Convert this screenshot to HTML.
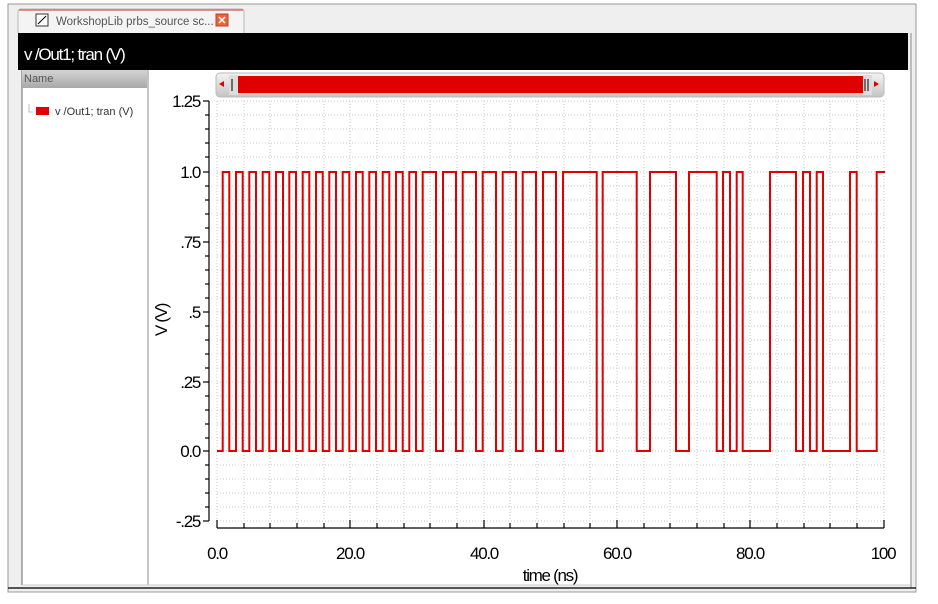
<!DOCTYPE html>
<html><head><meta charset="utf-8"><style>
html,body{margin:0;padding:0;background:#fff;width:938px;height:604px;overflow:hidden}
svg{display:block}
text{font-family:"Liberation Sans",sans-serif}
</style></head><body>
<svg width="938" height="604" xmlns="http://www.w3.org/2000/svg">
<rect x="0" y="0" width="938" height="604" fill="#fff"/>
<rect x="8" y="4" width="908" height="588" fill="#efefef" stroke="#9a9a9a"/>
<!-- tab -->
<path d="M18 33 V12 Q18 9 21 9 H241 Q244 9 244 12 V33" fill="#f4f4f4" stroke="#b8b8b8"/>
<line x1="19" y1="10" x2="243" y2="10" stroke="#e07070" stroke-width="1.5"/>
<rect x="36" y="14" width="12" height="12" fill="#fff" stroke="#333"/>
<line x1="38" y1="24" x2="46" y2="16" stroke="#000"/>
<text x="56" y="25" font-size="11.5" fill="#555">WorkshopLib prbs_source sc...</text>
<rect x="216" y="14" width="12" height="12" fill="#e8643a" stroke="#c04020"/>
<path d="M219 17 L225 23 M225 17 L219 23" stroke="#fff" stroke-width="1.5"/>
<!-- black title -->
<rect x="18" y="33" width="890" height="37" fill="#000"/>
<text x="24" y="60" font-size="17" fill="#fff" letter-spacing="-1.2">v /Out1; tran (V)</text>
<!-- content -->
<rect x="22" y="70" width="888" height="515" fill="#fff"/>
<line x1="911" y1="33" x2="911" y2="588" stroke="#888"/>
<line x1="8" y1="588" x2="916" y2="588" stroke="#222" stroke-width="1.5"/>
<line x1="22" y1="70" x2="22" y2="585" stroke="#666"/>
<line x1="148" y1="70" x2="148" y2="585" stroke="#888"/>
<line x1="22" y1="585" x2="910" y2="585" stroke="#ccc"/>
<defs><linearGradient id="hg" x1="0" y1="0" x2="0" y2="1"><stop offset="0" stop-color="#d4d4d4"/><stop offset="1" stop-color="#a8a8a8"/></linearGradient>
<linearGradient id="sg" x1="0" y1="0" x2="0" y2="1"><stop offset="0" stop-color="#f4f4f4"/><stop offset="1" stop-color="#c4c4c4"/></linearGradient></defs>
<rect x="22" y="70" width="125" height="18" fill="url(#hg)"/>
<text x="24" y="82" font-size="11" fill="#555">Name</text>
<path d="M29 104 V112 H33" stroke="#bbb" fill="none"/>
<rect x="36" y="107" width="13" height="8" fill="#e00000"/>
<text x="55" y="115" font-size="11" fill="#333">v /Out1; tran (V)</text>
<!-- scrollbar -->
<rect x="216" y="73" width="668" height="24" rx="4" fill="url(#sg)" stroke="#bbb"/>
<rect x="238" y="76" width="625" height="17" fill="#e00000"/>
<rect x="229" y="75" width="9" height="20" fill="#ddd"/>
<line x1="232" y1="79" x2="232" y2="91" stroke="#000"/>
<rect x="863" y="75" width="9" height="20" fill="#ddd"/>
<line x1="865" y1="79" x2="865" y2="91" stroke="#000"/><line x1="868" y1="79" x2="868" y2="91" stroke="#000"/>
<path d="M219 84 L224 81 L224 87 Z" fill="#e00000"/>
<path d="M879 84 L874 81 L874 87 Z" fill="#e00000"/>
<!-- grid -->
<g stroke="#c8c8c8" stroke-dasharray="1,2" stroke-width="1">
<line x1="217" y1="101" x2="884" y2="101"/><line x1="217" y1="115" x2="884" y2="115"/><line x1="217" y1="129" x2="884" y2="129"/><line x1="217" y1="143" x2="884" y2="143"/><line x1="217" y1="157" x2="884" y2="157"/><line x1="217" y1="172" x2="884" y2="172"/><line x1="217" y1="186" x2="884" y2="186"/><line x1="217" y1="200" x2="884" y2="200"/><line x1="217" y1="214" x2="884" y2="214"/><line x1="217" y1="228" x2="884" y2="228"/><line x1="217" y1="242" x2="884" y2="242"/><line x1="217" y1="256" x2="884" y2="256"/><line x1="217" y1="270" x2="884" y2="270"/><line x1="217" y1="284" x2="884" y2="284"/><line x1="217" y1="298" x2="884" y2="298"/><line x1="217" y1="312" x2="884" y2="312"/><line x1="217" y1="326" x2="884" y2="326"/><line x1="217" y1="340" x2="884" y2="340"/><line x1="217" y1="354" x2="884" y2="354"/><line x1="217" y1="368" x2="884" y2="368"/><line x1="217" y1="382" x2="884" y2="382"/><line x1="217" y1="396" x2="884" y2="396"/><line x1="217" y1="410" x2="884" y2="410"/><line x1="217" y1="424" x2="884" y2="424"/><line x1="217" y1="438" x2="884" y2="438"/><line x1="217" y1="451" x2="884" y2="451"/><line x1="217" y1="465" x2="884" y2="465"/><line x1="217" y1="479" x2="884" y2="479"/><line x1="217" y1="493" x2="884" y2="493"/><line x1="217" y1="507" x2="884" y2="507"/><line x1="217" y1="521" x2="884" y2="521"/>
<line x1="217" y1="101" x2="217" y2="521"/><line x1="244" y1="101" x2="244" y2="521"/><line x1="270" y1="101" x2="270" y2="521"/><line x1="297" y1="101" x2="297" y2="521"/><line x1="324" y1="101" x2="324" y2="521"/><line x1="350" y1="101" x2="350" y2="521"/><line x1="377" y1="101" x2="377" y2="521"/><line x1="404" y1="101" x2="404" y2="521"/><line x1="430" y1="101" x2="430" y2="521"/><line x1="457" y1="101" x2="457" y2="521"/><line x1="484" y1="101" x2="484" y2="521"/><line x1="510" y1="101" x2="510" y2="521"/><line x1="537" y1="101" x2="537" y2="521"/><line x1="564" y1="101" x2="564" y2="521"/><line x1="590" y1="101" x2="590" y2="521"/><line x1="617" y1="101" x2="617" y2="521"/><line x1="644" y1="101" x2="644" y2="521"/><line x1="670" y1="101" x2="670" y2="521"/><line x1="697" y1="101" x2="697" y2="521"/><line x1="724" y1="101" x2="724" y2="521"/><line x1="750" y1="101" x2="750" y2="521"/><line x1="777" y1="101" x2="777" y2="521"/><line x1="804" y1="101" x2="804" y2="521"/><line x1="830" y1="101" x2="830" y2="521"/><line x1="857" y1="101" x2="857" y2="521"/><line x1="884" y1="101" x2="884" y2="521"/>
</g>
<!-- y axis -->
<g stroke="#000" stroke-width="1.2">
<line x1="209" y1="101" x2="209" y2="521"/>
<line x1="203" y1="101" x2="209" y2="101"/><line x1="205" y1="115" x2="209" y2="115"/><line x1="205" y1="129" x2="209" y2="129"/><line x1="205" y1="143" x2="209" y2="143"/><line x1="205" y1="157" x2="209" y2="157"/><line x1="203" y1="172" x2="209" y2="172"/><line x1="205" y1="186" x2="209" y2="186"/><line x1="205" y1="200" x2="209" y2="200"/><line x1="205" y1="214" x2="209" y2="214"/><line x1="205" y1="228" x2="209" y2="228"/><line x1="203" y1="242" x2="209" y2="242"/><line x1="205" y1="256" x2="209" y2="256"/><line x1="205" y1="270" x2="209" y2="270"/><line x1="205" y1="284" x2="209" y2="284"/><line x1="205" y1="298" x2="209" y2="298"/><line x1="203" y1="312" x2="209" y2="312"/><line x1="205" y1="326" x2="209" y2="326"/><line x1="205" y1="340" x2="209" y2="340"/><line x1="205" y1="354" x2="209" y2="354"/><line x1="205" y1="368" x2="209" y2="368"/><line x1="203" y1="382" x2="209" y2="382"/><line x1="205" y1="396" x2="209" y2="396"/><line x1="205" y1="410" x2="209" y2="410"/><line x1="205" y1="424" x2="209" y2="424"/><line x1="205" y1="438" x2="209" y2="438"/><line x1="203" y1="451" x2="209" y2="451"/><line x1="205" y1="465" x2="209" y2="465"/><line x1="205" y1="479" x2="209" y2="479"/><line x1="205" y1="493" x2="209" y2="493"/><line x1="205" y1="507" x2="209" y2="507"/><line x1="203" y1="521" x2="209" y2="521"/>
<line x1="217" y1="528" x2="884" y2="528"/>
<line x1="217" y1="528" x2="217" y2="520"/><line x1="244" y1="528" x2="244" y2="523"/><line x1="270" y1="528" x2="270" y2="523"/><line x1="297" y1="528" x2="297" y2="523"/><line x1="324" y1="528" x2="324" y2="523"/><line x1="350" y1="528" x2="350" y2="520"/><line x1="377" y1="528" x2="377" y2="523"/><line x1="404" y1="528" x2="404" y2="523"/><line x1="430" y1="528" x2="430" y2="523"/><line x1="457" y1="528" x2="457" y2="523"/><line x1="484" y1="528" x2="484" y2="520"/><line x1="510" y1="528" x2="510" y2="523"/><line x1="537" y1="528" x2="537" y2="523"/><line x1="564" y1="528" x2="564" y2="523"/><line x1="590" y1="528" x2="590" y2="523"/><line x1="617" y1="528" x2="617" y2="520"/><line x1="644" y1="528" x2="644" y2="523"/><line x1="670" y1="528" x2="670" y2="523"/><line x1="697" y1="528" x2="697" y2="523"/><line x1="724" y1="528" x2="724" y2="523"/><line x1="750" y1="528" x2="750" y2="520"/><line x1="777" y1="528" x2="777" y2="523"/><line x1="804" y1="528" x2="804" y2="523"/><line x1="830" y1="528" x2="830" y2="523"/><line x1="857" y1="528" x2="857" y2="523"/><line x1="884" y1="528" x2="884" y2="520"/>
</g>
<g font-size="17" fill="#000" letter-spacing="-1.3" text-anchor="end">
<text x="200" y="107">1.25</text><text x="200" y="178">1.0</text><text x="200" y="248">.75</text><text x="200" y="318">.5</text><text x="200" y="388">.25</text><text x="200" y="457">0.0</text><text x="200" y="527">-.25</text>
</g>
<g font-size="17" fill="#000" letter-spacing="-1.3" text-anchor="middle">
<text x="217" y="559">0.0</text><text x="350" y="559">20.0</text><text x="484" y="559">40.0</text><text x="617" y="559">60.0</text><text x="750" y="559">80.0</text><text x="883" y="559">100</text>
<text x="550" y="581">time (ns)</text>
<text transform="translate(167,320) rotate(-90)">V (V)</text>
</g>
<!-- waveform -->
<polyline fill="none" stroke="#e00000" stroke-width="2" points="217,451 222.7,451 222.7,172 229.3,172 229.3,451 236,451 236,172 242.7,172 242.7,451 249.3,451 249.3,172 256,172 256,451 262.7,451 262.7,172 269.3,172 269.3,451 276,451 276,172 283,172 283,451 289.3,451 289.3,172 296,172 296,451 302.7,451 302.7,172 309.3,172 309.3,451 316,451 316,172 322.7,172 322.7,451 329.3,451 329.3,172 336,172 336,451 342.7,451 342.7,172 349.3,172 349.3,451 356,451 356,172 362.7,172 362.7,451 369.3,451 369.3,172 376,172 376,451 382.7,451 382.7,172 389.3,172 389.3,451 396,451 396,172 402.7,172 402.7,451 409.3,451 409.3,172 416,172 416,451 422.7,451 422.7,172 436,172 436,451 443,451 443,172 456,172 456,451 462.7,451 462.7,172 476,172 476,451 482.7,451 482.7,172 496,172 496,451 502.7,451 502.7,172 516,172 516,451 522.7,451 522.7,172 536,172 536,451 543,451 543,172 556,172 556,451 563,451 563,172 596.7,172 596.7,451 602.7,451 602.7,172 636.7,172 636.7,451 650,451 650,172 676,172 676,451 689,451 689,172 716.7,172 716.7,451 723,451 723,172 730,172 730,451 736.7,451 736.7,172 742.7,172 742.7,451 770,451 770,172 796,172 796,451 803,451 803,172 810,172 810,451 816.7,451 816.7,172 823,172 823,451 850,451 850,172 856.7,172 856.7,451 876.7,451 876.7,172 885,172"/>
</svg>
</body></html>
